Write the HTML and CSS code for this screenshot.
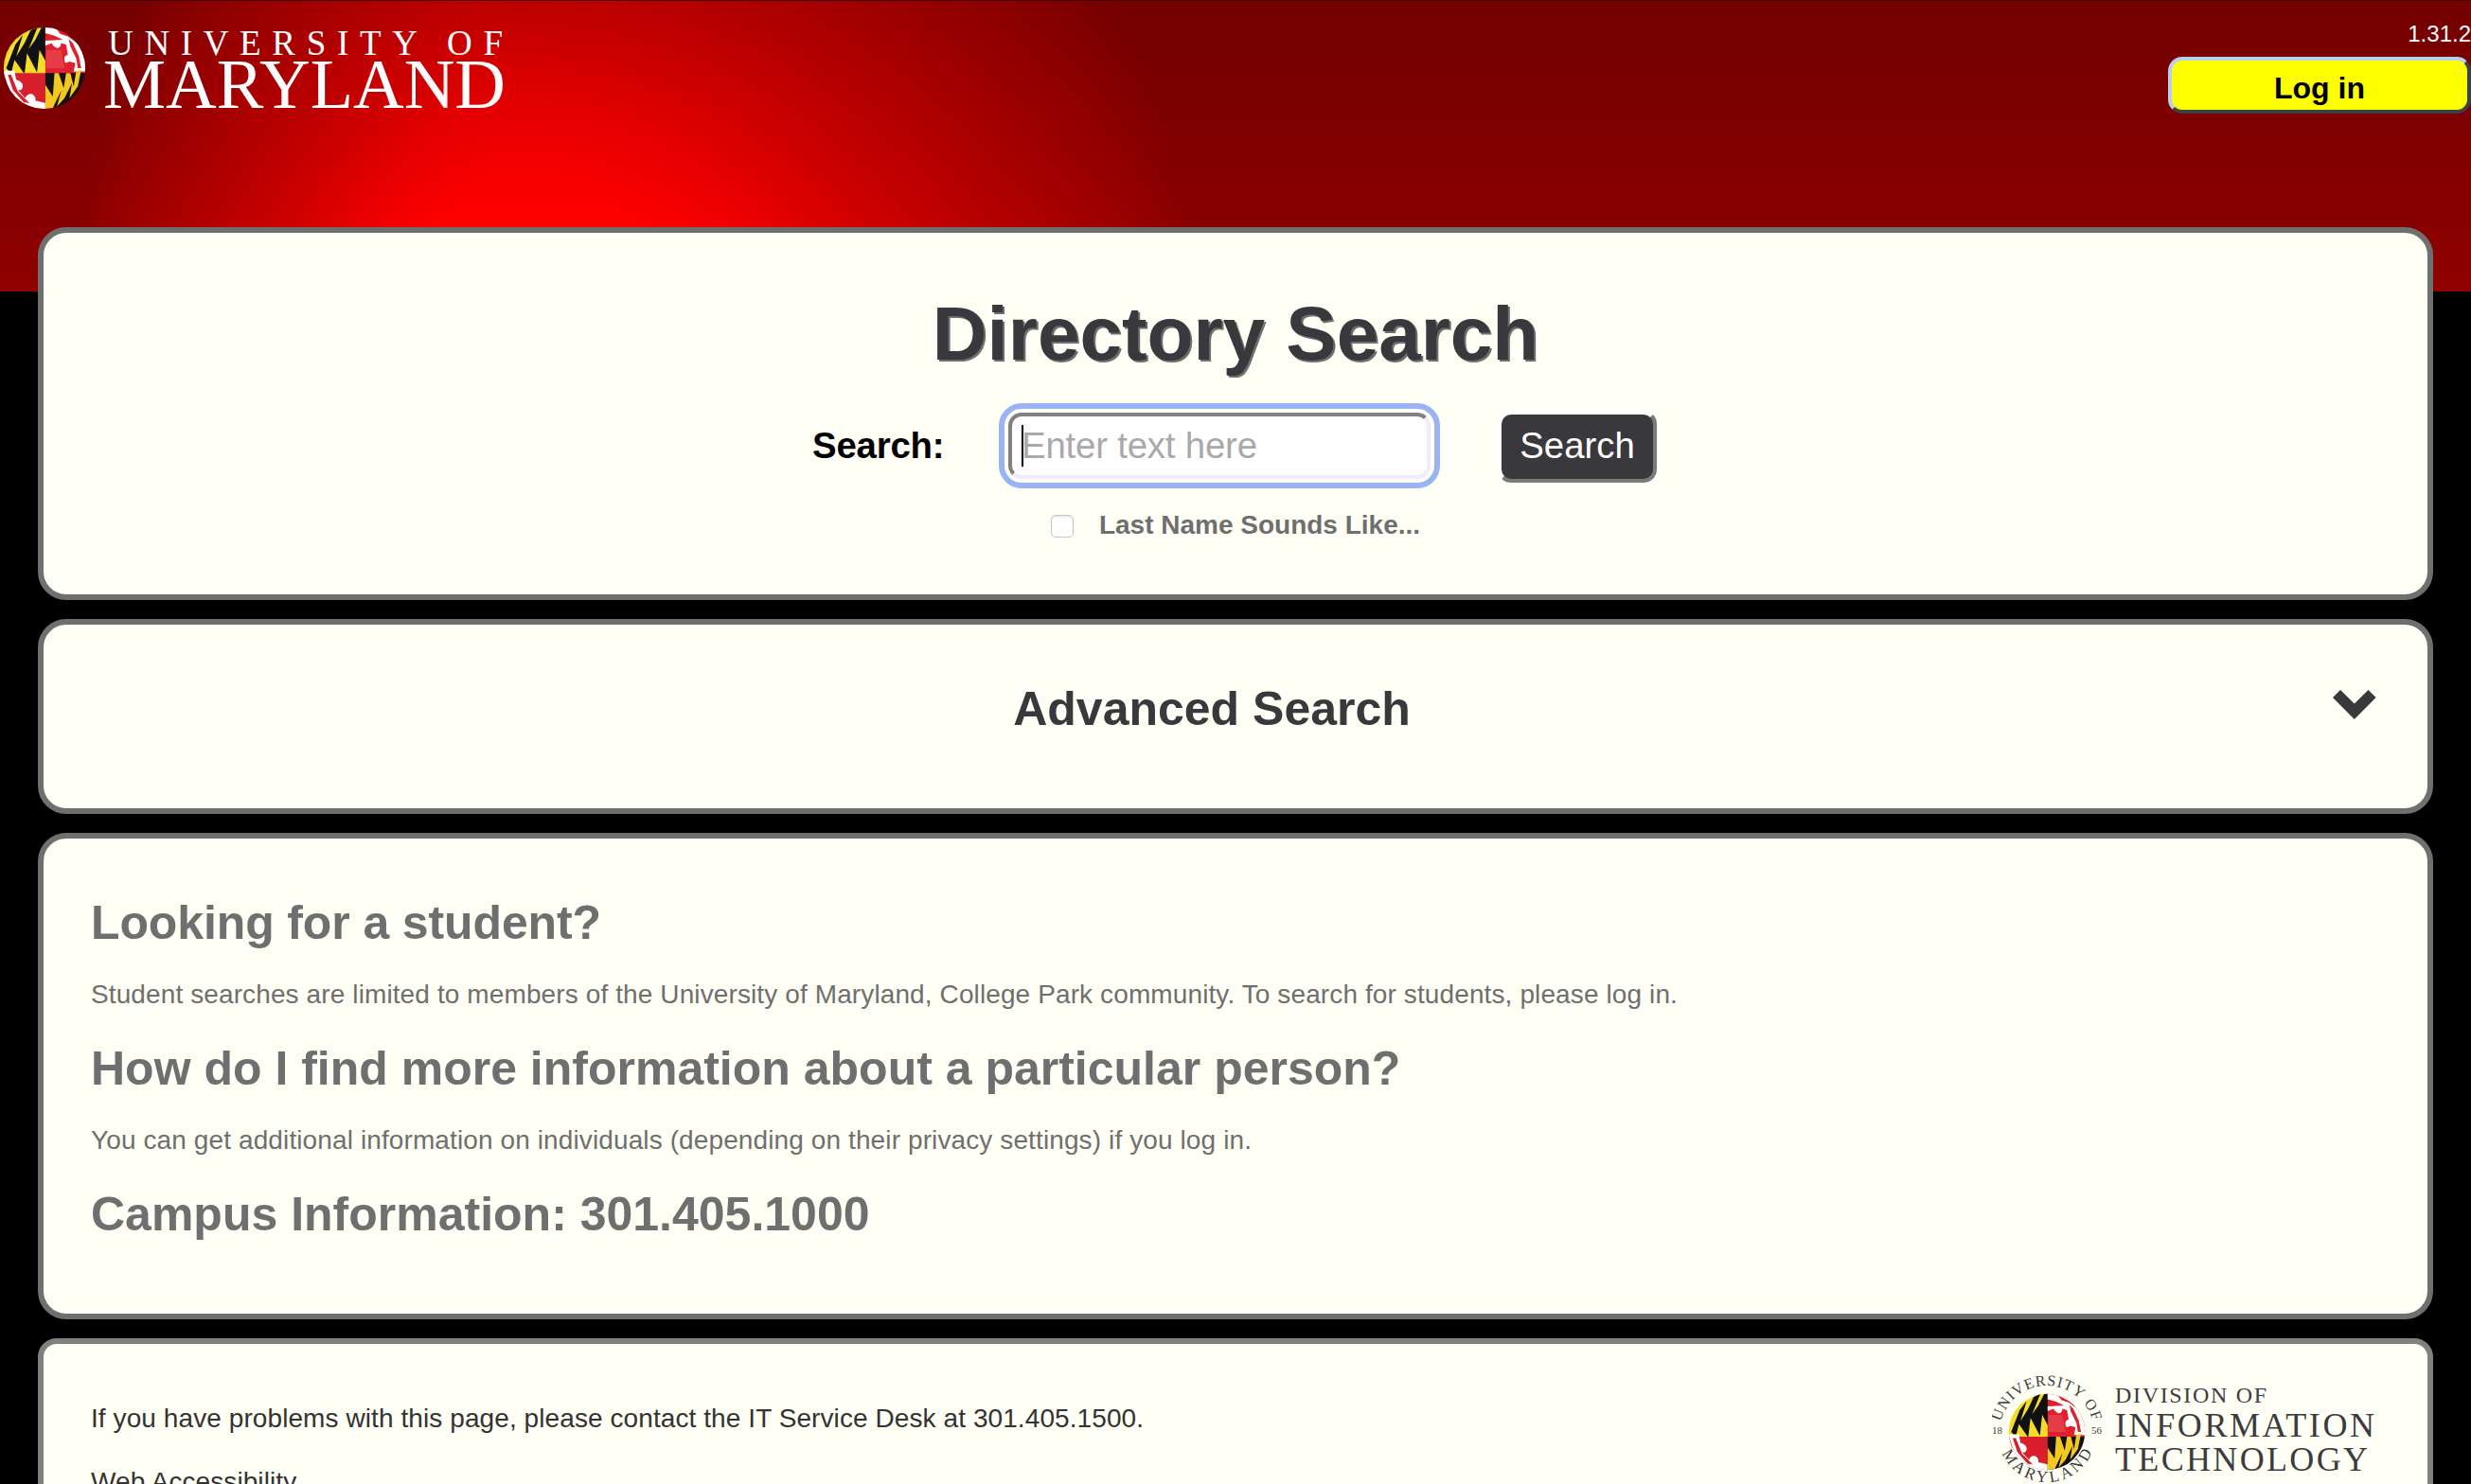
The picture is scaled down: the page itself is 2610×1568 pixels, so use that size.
FILE: index.html
```html
<!DOCTYPE html>
<html lang="en">
<head>
<meta charset="utf-8">
<title>Directory Search</title>
<link rel="stylesheet" href="styles.css">
</head>
<body>
<svg class="defs" width="0" height="0" aria-hidden="true">
  <defs>
    <clipPath id="ball"><circle cx="50" cy="50" r="49"/></clipPath>
    <symbol id="globe" viewBox="0 0 100 100">
      <g clip-path="url(#ball)">
        <path fill="#f5dc28" d="M0 0H52V57H0z"/>
        <path fill="#111" d="M52 0V43L44 28 41 55 29 32 26 57 14 40 10 56 4 50 15 22 24 10 16 36 26 20 33 5 42 0 31 27 39 16 47 0z"/>
        <path fill="#e0202c" d="M51 0H100V56H51z"/>
        <path fill="#fff" d="M51 0 62 0 69 9 78 12 92 22 100 45V54H85L87 44 80 42Q74 46 74 40 73 35 78 34L76 22 70 20Q69 28 63 25 59 22 59 20L51 23V17L72 16 62 11 51 8zM79 15 81 24 88 38 90 50 94 50 91 35 84 20z" fill-rule="evenodd"/>
        <path fill="#e9505a" d="M52 28H70L74 50H52z" opacity=".6"/>
        <path fill="#d81f2b" d="M0 56H52V100H0z"/>
        <path fill="#fff" d="M0 53H14L16 64Q24 66 24 72 23 78 18 76L27 86Q29 80 35 81 40 84 39 89L52 92V100H30L10 82zM6 58 12 76 25 91 32 92 18 78 10 58z" fill-rule="evenodd"/>
        <path fill="#111" d="M51 56H100V100H51z"/>
        <path fill="#f5c820" d="M51 70 60 84 62 56 67 56 73 74 76 56 81 56 85 72 88 54 94 52 90 72 80 86 83 68 74 86 65 96 70 77 60 98 51 100z"/>
      </g>
    </symbol>
  </defs>
</svg>

<header class="banner">
  <svg class="logo" width="540" height="124" viewBox="0 0 540 124" role="img" aria-label="University of Maryland">
    <use href="#globe" x="3" y="28" width="88" height="88"/>
    <g class="logo-text">
      <text x="114" y="58" font-size="37" textLength="417">UNIVERSITY OF</text>
      <text x="109" y="114" font-size="73" textLength="425" lengthAdjust="spacingAndGlyphs">MARYLAND</text>
    </g>
  </svg>
  <div class="account">
    <span class="version">1.31.2</span>
    <button class="login" type="button">Log in</button>
  </div>
</header>

<main class="cards">
  <section class="card search">
    <h1>Directory Search</h1>
    <form class="search-form">
      <label class="search-label">Search:</label>
      <div class="field"><span class="caret"></span><span class="placeholder">Enter text here</span></div>
      <button class="submit" type="button">Search</button>
    </form>
    <div class="sounds"><span class="box"></span><label>Last Name Sounds Like...</label></div>
  </section>

  <section class="card advanced">
    <h2>Advanced Search</h2>
    <svg class="chevron" width="46" height="32" viewBox="0 0 46 32"><path d="M0 8 8 0 22.8 14.5 37.5 0 45.6 8 22.8 31z"/></svg>
  </section>

  <section class="card info">
    <h2 class="tight">Looking for a student?</h2>
    <p>Student searches are limited to members of the University of Maryland, College Park community. To search for students, please log in.</p>
    <h2>How do I find more information about a particular person?</h2>
    <p>You can get additional information on individuals (depending on their privacy settings) if you log in.</p>
    <h2>Campus Information: 301.405.1000</h2>
  </section>

  <footer class="card foot">
    <div class="foot-text">
      <p>If you have problems with this page, please contact the IT Service Desk at 301.405.1500.</p>
      <p>Web Accessibility</p>
    </div>
    <svg class="dit" width="410" height="130" viewBox="0 0 410 130" role="img" aria-label="Division of Information Technology">
      <defs>
        <path id="arc-top" d="M8 66A50 50 0 0 1 108 66"/>
        <path id="arc-bottom" d="M6 66A52 52 0 0 0 110 66"/>
      </defs>
      <use href="#globe" x="17" y="24" width="82" height="82"/>
      <g class="dit-text">
        <text font-size="16"><textPath href="#arc-top" startOffset="12" textLength="132">UNIVERSITY OF</textPath></text>
        <text font-size="17"><textPath href="#arc-bottom" startOffset="22" textLength="120">MARYLAND</textPath></text>
        <text x="0" y="67" font-size="11">18</text>
        <text x="105" y="67" font-size="11">56</text>
        <text x="130" y="34" font-size="24" textLength="160">DIVISION OF</text>
        <text x="130" y="70" font-size="36" textLength="274">INFORMATION</text>
        <text x="130" y="106" font-size="36" textLength="267">TECHNOLOGY</text>
      </g>
    </svg>
  </footer>
</main>
</body>
</html>
```
FILE: styles.css
```css
* { box-sizing: border-box; }
html { background: #000; }
body {
  margin: 0;
  height: 1568px;
  overflow: hidden;
  font-family: "Liberation Sans", Arial, sans-serif;
  font-size: 28px;
  color: #333;
  background:
    linear-gradient(rgba(116,0,0,.25), rgba(116,0,0,0) 240px) 0 0 / 100% 308px no-repeat,
    radial-gradient(ellipse 460px 660px at 100% 308px, rgba(255,0,0,1) 20%, rgba(255,0,0,.88) 33%, rgba(255,0,0,.55) 57%, rgba(255,0,0,.3) 77%, rgba(255,0,0,.14) 91%, rgba(255,0,0,0)) 0 0 / 548px 308px no-repeat,
    radial-gradient(ellipse 710px 660px at 0 308px, rgba(255,0,0,1) 20%, rgba(255,0,0,.88) 33%, rgba(255,0,0,.55) 57%, rgba(255,0,0,.3) 77%, rgba(255,0,0,.14) 91%, rgba(255,0,0,0)) 548px 0 / 1200px 308px no-repeat,
    linear-gradient(#740000, #900000) 0 0 / 100% 308px no-repeat,
    #000;
}
.defs { display: block; height: 0; }
h1, h2, p { margin: 0; }
button { font-family: inherit; cursor: pointer; }

.banner {
  height: 240px;
  display: flex;
  justify-content: space-between;
  align-items: flex-start;
  box-shadow: inset 0 1px #400000;
}
.logo { display: block; }
.logo-text { fill: #fff; font-family: "Liberation Serif", "Times New Roman", serif; }
.account {
  width: 320px;
  padding-top: 22px;
  display: flex;
  flex-direction: column;
  align-items: flex-end;
}
.version { color: #fff; font-size: 24px; line-height: 28px; margin-bottom: 10px; }
.login {
  width: 320px;
  height: 60px;
  padding: 7px 0 0;
  border: 4px solid;
  border-color: #b8d0ee #3a4149 #3a4149 #b8d0ee;
  border-radius: 15px;
  background: #ff0;
  color: #000;
  font-size: 32px;
  font-weight: bold;
}

.cards { display: flex; flex-direction: column; gap: 20px; padding: 0 40px; }
.card {
  border: 6px solid #6f6f6f;
  border-radius: 30px;
  background: #fffff6;
}
.search { height: 394px; display: flex; flex-direction: column; align-items: center; padding-top: 61px; }
.search h1 {
  font-size: 80px;
  line-height: 92px;
  color: #39383d;
  text-shadow: 2px 2px #6f6f6f;
}
.search-form { display: flex; align-items: center; height: 90px; margin-top: 27px; margin-left: -2px; }
.search-label { color: #000; font-weight: bold; font-size: 38.4px; letter-spacing: -.2px; width: 140px; margin-right: 67px; }
.field {
  width: 446px;
  height: 70px;
  display: flex;
  align-items: center;
  padding-left: 10px;
  border: 4px solid;
  border-color: #808086 #eeecff #eeecff #808086;
  border-radius: 14px;
  background: #fff;
  outline: 6px solid #9ab3f5;
  outline-offset: 4px;
  font-size: 38.4px;
}
.caret { width: 2px; height: 44px; background: #000; margin-right: -2px; }
.placeholder { color: #a9a9a9; letter-spacing: -.2px; }
.submit {
  width: 168px;
  height: 76px;
  margin-left: 71px;
  margin-top: 2px;
  padding: 0 0 2px;
  border: 4px solid;
  border-color: #fff #7b7b7b #7b7b7b #fff;
  border-radius: 14px;
  background: #39383d;
  color: #fff;
  font-size: 38.4px;
}
.sounds { display: flex; align-items: center; gap: 27px; margin-top: 22px; color: #6f6f6f; font-weight: bold; line-height: 34px; }
.box { width: 24px; height: 24px; border: 1px solid #c4c4c4; border-radius: 5px; background: #fff; box-shadow: inset 0 2px 2px #eee; margin-top: 2px; }

h2 { font-size: 50px; line-height: 58px; }
.tight { letter-spacing: -.12px; }
.advanced { height: 206px; display: flex; align-items: flex-start; padding: 60px 54px 0 50px; color: #39383d; }
.advanced h2 { flex: 1; text-align: center; }
.chevron { fill: #39383d; margin-top: 9px; }

.info { height: 514px; padding: 60px 50px 0; color: #6f6f6f; }
.info p { height: 32px; line-height: 32px; margin: 31px 0 33px; white-space: nowrap; letter-spacing: .112px; }

.foot { height: 240px; border-color: #808080; border-radius: 20px; display: flex; justify-content: space-between; padding: 28px 50px 0; }
.foot-text { padding-top: 34px; }
.foot-text p { line-height: 34px; margin-bottom: 33px; letter-spacing: .085px; }
.dit { display: block; }
.dit-text { fill: #3c3c40; font-family: "Liberation Serif", "Times New Roman", serif; }
```
